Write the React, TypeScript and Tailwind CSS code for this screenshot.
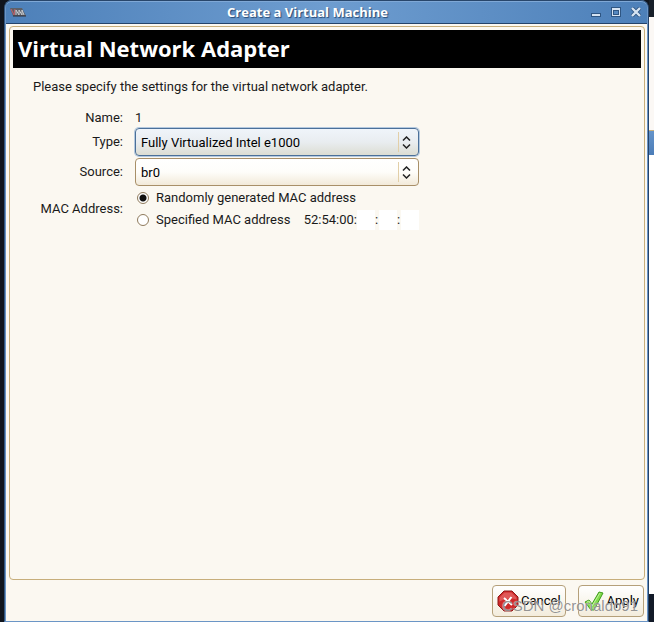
import { useState } from "react";
import type { ReactNode } from "react";

interface ComboBoxProps {
  id: string;
  options: string[];
  active?: boolean;
}

function ComboBox({ id, options, active }: ComboBoxProps) {
  return (
    <div
      className={
        active
          ? "relative h-7 rounded border border-[#4b7099] bg-linear-to-b from-[#eff4fa] via-[#e9edf0] to-[#dcddd3] shadow-[0_0_0_1px_#b4c9df]"
          : "relative h-7 rounded border border-[#a88f68] bg-linear-to-b from-white via-[#fefdfa] to-[#f2ead9]"
      }
    >
      <select
        id={id}
        className="h-full w-full appearance-none bg-transparent pt-0.5 pr-6 pl-[5px] text-[13px] text-black outline-none"
      >
        {options.map((option) => (
          <option key={option}>{option}</option>
        ))}
      </select>
      {/* Divider and arrows */}
      <div className="pointer-events-none absolute inset-y-[3px] right-[7px] flex items-center border-l border-[#e2cfa8] pl-[3px]">
        <svg width="9" height="13" viewBox="0 0 9 13" fill="none" stroke="#222" strokeWidth="1.5">
          <path d="M1 4.5 4.5 1 8 4.5M1 8.5 4.5 12 8 8.5" />
        </svg>
      </div>
    </div>
  );
}

interface RadioOptionProps {
  id: string;
  label: string;
  checked: boolean;
  onChange: () => void;
  children?: ReactNode;
}

function RadioOption({ id, label, checked, onChange, children }: RadioOptionProps) {
  return (
    <div className="flex h-5 items-center pl-0.5">
      <input
        type="radio"
        id={id}
        name="mac"
        checked={checked}
        onChange={onChange}
        className="h-3 w-3 shrink-0 appearance-none rounded-full border border-[#8f7a5c] bg-white checked:bg-[radial-gradient(circle,#111_3px,#fff_4px)]"
      />
      <label htmlFor={id} className="ml-[7px] whitespace-nowrap">
        {label}
      </label>
      {children}
    </div>
  );
}

function TitleBar() {
  return (
    <header className="flex h-6 items-center rounded-t-md border-t border-b border-t-[#28466b] border-b-[#24436a] bg-linear-to-r from-[#4d80b9] via-[#6e9dd0] to-[#4d80b9] pr-1.5 pl-1 font-['Open_Sans',sans-serif] shadow-[inset_0_1px_0_#7fa8d6]">
      <div className="flex flex-1">
        <svg width="16" height="9" viewBox="0 0 16 9">
          <path d="M0 0h12l4 8H3z" fill="#5c6068" />
          <path d="M1 1l3 6 1-6" stroke="#c2606a" fill="none" />
          <path d="M6 7V2l3 5V2l3 5V2l2 5" stroke="#c8ccd1" fill="none" />
          <path d="M3 8h13" stroke="#302f35" />
        </svg>
      </div>
      <h1 className="pr-9 text-[13px] font-bold text-white [text-shadow:1px_1px_1px_#274a75]">
        Create a Virtual Machine
      </h1>
      <div className="flex flex-1 items-center justify-end gap-2.5">
        <button type="button" aria-label="Minimize">
          <svg width="10" height="10" viewBox="0 0 10 10">
            <rect x=".5" y="6.5" width="9" height="3" fill="#d5e3f2" stroke="#2f5683" />
          </svg>
        </button>
        <button type="button" aria-label="Maximize">
          <svg width="10" height="10" viewBox="0 0 10 10" stroke="#2f5683">
            <rect x=".5" y=".5" width="9" height="9" fill="#d5e3f2" />
            <rect x="2.5" y="3.5" width="5" height="4" fill="#5588c0" />
          </svg>
        </button>
        <button type="button" aria-label="Close">
          <svg width="10" height="10" viewBox="0 0 10 10">
            <path d="M1 1l8 8M9 1L1 9" stroke="#2f5683" strokeWidth="4" />
            <path d="M1 1l8 8M9 1L1 9" stroke="#d5e3f2" strokeWidth="2.4" />
          </svg>
        </button>
      </div>
    </header>
  );
}

function DialogButton({ icon, children }: { icon: ReactNode; children: ReactNode }) {
  return (
    <button
      type="button"
      className="flex h-8 items-center gap-0.5 rounded border border-[#b5a07a] bg-linear-to-b from-white to-[#f3ecdc] px-1 text-[13px] text-black"
    >
      {icon}
      {children}
    </button>
  );
}

export default function App() {
  const [macMode, setMacMode] = useState("random");

  return (
    <div className="relative flex min-h-screen bg-[#10151e] font-[Roboto,sans-serif] text-[13px] leading-4 text-[#1a1a1a]">
      <div className="w-1 shrink-0" />

      {/* Dialog window */}
      <div className="flex min-w-0 flex-1 flex-col overflow-hidden rounded-t-lg border-r border-b border-l border-r-[#24436a] border-b-[#6b95c6] border-l-[#31557f] bg-[#6b95c6] px-px">
        <TitleBar />
        <div className="flex flex-1 flex-col bg-[#fbf8f1] pt-0.5 pr-0.5 pb-1 pl-[3px]">
          <main className="flex-1 rounded border border-[#c7ae7b] p-[3px]">
            <h2 className="flex h-[38px] items-center bg-black px-[5px] pb-0.5 font-['Open_Sans',sans-serif] text-[22px] font-bold text-white">
              Virtual Network Adapter
            </h2>
            <div className="px-5 pt-[11px]">
              <p>Please specify the settings for the virtual network adapter.</p>
              <form className="mt-[15px] grid grid-cols-[90px_284px] items-center gap-x-3 gap-y-0.5">
                <span className="text-right">Name:</span>
                <span>1</span>
                <label htmlFor="type" className="text-right">
                  Type:
                </label>
                <ComboBox id="type" active options={["Fully Virtualized Intel e1000"]} />
                <label htmlFor="source" className="text-right">
                  Source:
                </label>
                <ComboBox id="source" options={["br0"]} />
                <span className="text-right">MAC Address:</span>
                <div role="radiogroup" aria-label="MAC Address" className="flex flex-col gap-0.5">
                  <RadioOption
                    id="random"
                    label="Randomly generated MAC address"
                    checked={macMode === "random"}
                    onChange={() => setMacMode("random")}
                  />
                  <RadioOption
                    id="specified"
                    label="Specified MAC address"
                    checked={macMode === "specified"}
                    onChange={() => setMacMode("specified")}
                  >
                    <span className="ml-auto">52:54:00:</span>
                    <input aria-label="MAC byte 4" maxLength={2} className="h-5 w-[18px] bg-white" />
                    <span className="w-1">:</span>
                    <input aria-label="MAC byte 5" maxLength={2} className="h-5 w-[18px] bg-white" />
                    <span className="w-1">:</span>
                    <input aria-label="MAC byte 6" maxLength={2} className="h-5 w-[18px] bg-white" />
                  </RadioOption>
                </div>
              </form>
            </div>
          </main>

          <footer className="mt-[5px] flex justify-end gap-3 pr-px">
            <DialogButton
              icon={
                <svg width="22" height="22" viewBox="0 0 22 22">
                  <path d="M7 1h8l6 6v8l-6 6H7l-6-6V7z" fill="#cf2929" stroke="#8d1616" />
                  <path d="M7.5 2.5h7l5 5v2c-5-2-11-1-17 2v-4z" fill="#df5858" />
                  <path d="M7 8l8 7M14.5 7l-7 9" stroke="#fff" strokeWidth="2" />
                </svg>
              }
            >
              Cancel
            </DialogButton>
            <DialogButton
              icon={
                <svg width="22" height="22" viewBox="0 0 22 22">
                  <path
                    d="M2 12l4-2 3 4L16 2l4 1-9 17H8z"
                    fill="#83dc4c"
                    stroke="#3f9b1d"
                    strokeLinejoin="round"
                  />
                  <path d="M4 12l2-1 3 5 8-13" stroke="#c2f39d" fill="none" />
                </svg>
              }
            >
              Apply
            </DialogButton>
          </footer>
        </div>
      </div>

      {/* Window behind the dialog */}
      <div className="flex w-[5px] shrink-0 flex-col">
        <div className="h-[17px] bg-[#18202a]" />
        <div className="h-[113px] bg-[#fbf8f5]" />
        <div className="h-[25px] border-t border-[#c7ae7b] bg-linear-to-b from-[#6594ca] to-[#4b7db8]" />
        <div className="flex-1 bg-white" />
        <div className="h-7 bg-[#121a28]" />
      </div>

      <span className="pointer-events-none absolute right-4 bottom-1.5 font-['Liberation_Sans',sans-serif] text-[15px] leading-5 text-[#777]/80 [text-shadow:0_0_1px_#fff]">
        CSDN @cronaldo91
      </span>
    </div>
  );
}
